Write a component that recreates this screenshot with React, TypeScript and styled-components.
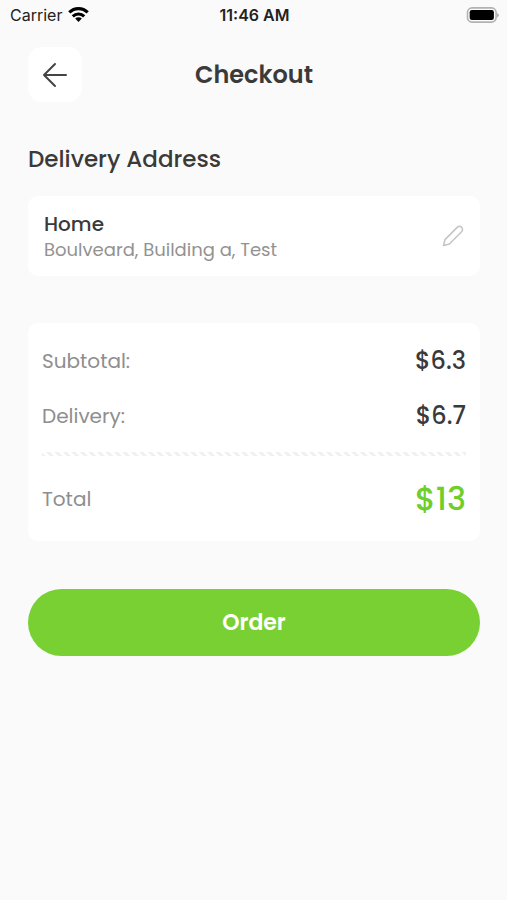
import React from "react";
import styled, { createGlobalStyle } from "styled-components";

const GlobalStyle = createGlobalStyle`
  *, *::before, *::after { box-sizing: border-box; }
  body {
    margin: 0;
    background: #fafafa;
    color: #3a3a3a;
    font-family: Poppins, Inter, "Open Sans", sans-serif;
  }
  h1, h2, p, dl, dt, dd, address { margin: 0; font-style: normal; }
  button { border: 0; padding: 0; font: inherit; cursor: pointer; }
`;

const Screen = styled.div`
  min-height: 100vh;
  background: #fafafa;
`;

const StatusBar = styled.div`
  display: grid;
  grid-template-columns: 1fr auto 1fr;
  align-items: center;
  height: 30px;
  padding: 0 8px 0 10px;
  color: #222;
  font-family: Inter, sans-serif;
  font-size: 16px;
  line-height: 20px;
`;

const Carrier = styled.div`
  display: flex;
  align-items: center;
  gap: 6px;
`;

const Clock = styled.time`
  font-weight: 600;
`;

const BatteryIcon = styled.svg`
  justify-self: end;
`;

const Content = styled.main`
  padding: 17px 27px 32px 28px;
`;

const Header = styled.header`
  display: grid;
  grid-template-columns: 54px 1fr 54px;
  align-items: center;
`;

const BackButton = styled.button`
  display: flex;
  align-items: center;
  justify-content: center;
  height: 55px;
  border-radius: 14px;
  background: #fff;
  color: #444;
`;

const Title = styled.h1`
  text-align: center;
  font-size: 24px;
  font-weight: 600;
  line-height: 36px;
`;

const SectionTitle = styled.h2`
  margin: 40px 0 20px;
  font-size: 23px;
  font-weight: 500;
  line-height: 34px;
`;

const Card = styled.section`
  border-radius: 10px;
  background: #fff;
`;

const AddressCard = styled(Card)`
  display: flex;
  align-items: center;
  justify-content: space-between;
  min-height: 80px;
  padding: 12px 16px;
`;

const AddressName = styled.p`
  font-size: 20px;
  font-weight: 500;
  line-height: 28px;
`;

const AddressText = styled.address`
  color: #929292;
  font-size: 18px;
  line-height: 24px;
`;

const EditButton = styled.button`
  display: flex;
  background: none;
  color: #c4c4c4;
`;

const SummaryCard = styled(Card)`
  margin: 47px 0 48px;
  padding: 10px 14px 12px;
`;

const Row = styled.div<{ $total?: boolean }>`
  display: flex;
  align-items: center;
  justify-content: space-between;
  height: ${({ $total }) => ($total ? 60 : 55)}px;
`;

const Label = styled.dt`
  color: #8e8e8e;
  font-size: 20px;
  line-height: 30px;
`;

const Amount = styled.dd<{ $total?: boolean }>`
  color: ${({ $total }) => ($total ? "#6fcd2c" : "#3a3a3a")};
  font-size: ${({ $total }) => ($total ? 32 : 24)}px;
  font-weight: 500;
  line-height: 40px;
`;

const Divider = styled.div`
  height: 4px;
  margin: 9px 0 13px;
  background: repeating-linear-gradient(45deg, #f0f0f0 0 2px, #fff 3px 5px, #f0f0f0 6px);
`;

const OrderButton = styled.button`
  display: block;
  width: 100%;
  height: 67px;
  border-radius: 34px;
  background: #78d032;
  color: #fff;
  font-size: 22px;
  font-weight: 600;
  line-height: 30px;
`;

const charges = [
  { label: "Subtotal:", amount: "$6.3" },
  { label: "Delivery:", amount: "$6.7" },
];

export default function App() {
  return (
    <Screen>
      <GlobalStyle />
      <StatusBar>
        <Carrier>
          <span>Carrier</span>
          <svg width="21" height="16" viewBox="0 0 21 16" aria-label="Wi-Fi" role="img">
            <g fill="none" stroke="#000" strokeWidth="3.1">
              <path d="M1.3 5.4a13 13 0 0 1 18.4 0" />
              <path d="M4.8 9.3a8.1 8.1 0 0 1 11.4 0" />
            </g>
            <path d="M7.2 11.6a4.7 4.7 0 0 1 6.6 0L10.5 15Z" fill="#000" />
          </svg>
        </Carrier>
        <Clock>11:46 AM</Clock>
        <BatteryIcon width="33" height="17" viewBox="0 0 33 17" aria-label="Battery full" role="img">
          <rect x="1.5" y="0.9" width="28.6" height="14.2" rx="4.5" fill="none" stroke="#b2b2b2" strokeWidth="1.6" />
          <rect x="3.7" y="3" width="24.2" height="10" rx="2.2" fill="#000" />
          <path d="M31.2 6v4.4q1.5-.8 1.5-2.2T31.2 6Z" fill="#a5a5a5" />
        </BatteryIcon>
      </StatusBar>
      <Content>
        <Header>
          <BackButton type="button" aria-label="Back">
            <svg width="26" height="26" viewBox="0 0 26 26" fill="none" stroke="currentColor" strokeWidth="2" strokeLinecap="round" strokeLinejoin="round">
              <path d="M24 13H2M13 2 2 13l11 11" />
            </svg>
          </BackButton>
          <Title>Checkout</Title>
        </Header>
        <SectionTitle>Delivery Address</SectionTitle>
        <AddressCard>
          <div>
            <AddressName>Home</AddressName>
            <AddressText>Boulveard, Building a, Test</AddressText>
          </div>
          <EditButton type="button" aria-label="Edit address">
            <svg width="22" height="22" viewBox="0 0 22 22" fill="none" stroke="currentColor" strokeWidth="1.5" strokeLinejoin="round">
              <path d="M1.5 20.5 3 14.6 15.2 2.4a3.1 3.1 0 0 1 4.4 4.4L7.4 19Z" />
            </svg>
          </EditButton>
        </AddressCard>
        <SummaryCard aria-label="Order summary">
          <dl>
            {charges.map(({ label, amount }) => (
              <Row key={label}>
                <Label>{label}</Label>
                <Amount>{amount}</Amount>
              </Row>
            ))}
          </dl>
          <Divider />
          <dl>
            <Row $total>
              <Label>Total</Label>
              <Amount $total>$13</Amount>
            </Row>
          </dl>
        </SummaryCard>
        <OrderButton type="button">Order</OrderButton>
      </Content>
    </Screen>
  );
}
